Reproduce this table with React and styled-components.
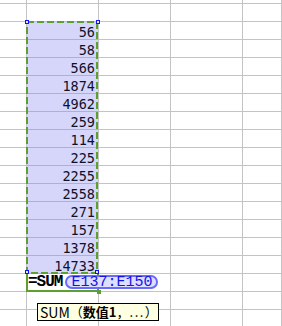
import React from "react";
import styled, { createGlobalStyle } from "styled-components";

const GlobalStyle = createGlobalStyle`
  html, body {
    margin: 0;
    padding: 0;
    background: #fff;
    overflow: hidden;
  }
`;

const GRID = "#c4c4c4";
const GREEN = "#5ca032";
const PICK = "#d6d6fb";

const Sheet = styled.div`
  position: relative;
  width: 282px;
  height: 326px;
  overflow: hidden;
  background: #fff;
`;

const Grid = styled.div`
  display: grid;
  grid-template-columns: 27px 72px 72px 72px 1fr;
  grid-template-rows: 4px repeat(18, 18px);
`;

const Cell = styled.div`
  box-sizing: border-box;
  border-right: 1px solid ${GRID};
  border-bottom: 1px solid ${(p) => (p.$picked ? "#aeaedc" : GRID)};
  background: ${(p) => (p.$picked ? PICK : "#fff")};
  display: flex;
  justify-content: flex-end;
  align-items: flex-end;
  padding: 0 3px 1px 0;
  font-family: "DejaVu Sans Mono", monospace;
  font-size: 13.5px;
  line-height: 12px;
  color: #10102a;
`;

/* the cell being edited: green frame, text runs past its right edge */
const EditCell = styled.div`
  position: relative;
  z-index: 2;
  box-sizing: border-box;
  margin-left: -1px;
  border: 2px solid ${GREEN};
  border-top: none;
  background: #fff;
  display: flex;
  align-items: center;
  white-space: nowrap;

  &::after {
    content: "";
    position: absolute;
    right: -4px;
    bottom: -4px;
    width: 4px;
    height: 4px;
    background: ${GREEN};
  }
`;

const Marquee = styled.svg`
  position: absolute;
  left: 24px;
  top: 19px;
  overflow: visible;
  z-index: 1;
`;

const Func = styled.span`
  font-family: "Liberation Mono", monospace;
  font-weight: bold;
  font-size: 16px;
  letter-spacing: -1px;
  color: #000;
  line-height: 14px;
`;

const RangeRef = styled.span`
  margin-left: 3px;
  height: 14px;
  box-sizing: border-box;
  padding: 0 4px;
  border: 2px solid #6a6aff;
  border-radius: 8px;
  background: #dedeff;
  color: #1414e6;
  font-family: "Liberation Mono", monospace;
  font-size: 15px;
  line-height: 11px;
  display: flex;
  align-items: center;
`;

const Tip = styled.div`
  position: absolute;
  left: 37px;
  top: 303px;
  z-index: 3;
  width: 122px;
  height: 18px;
  box-sizing: border-box;
  border: 1px solid #000;
  background: #ffffe1;
  display: flex;
  align-items: center;
  padding-left: 2px;
  font-family: "Noto Sans CJK SC", sans-serif;
  font-size: 13px;
  line-height: 16px;
  color: #000;
  white-space: nowrap;
`;

const TipName = styled.span`
  font-size: 14px;
`;

const TipArg = styled.b`
  font-weight: bold;
`;

const Dots = styled.span`
  letter-spacing: 1.5px;
`;

const values = [56, 58, 566, 1874, 4962, 259, 114, 225, 2255, 2558, 271, 157, 1378, 14733];
const EDIT_ROW = 2 + values.length;

export default function App() {
  const rows = [];
  for (let r = 0; r < 19; r++) {
    for (let c = 0; c < 5; c++) {
      const idx = r - 2;
      const picked = c === 1 && idx >= 0 && idx < values.length;
      if (c === 1 && r === EDIT_ROW) {
        rows.push(
          <EditCell key={r + "-" + c}>
            <Func>=SUM</Func>
            <RangeRef>E137:E150</RangeRef>
          </EditCell>
        );
        continue;
      }
      rows.push(
        <Cell key={r + "-" + c} $picked={picked}>
          {picked ? values[idx] : null}
        </Cell>
      );
    }
  }

  return (
    <>
      <GlobalStyle />
      <Sheet>
        <Grid>{rows}</Grid>
        <Marquee width="78" height="259">
          <rect
            x="3"
            y="3"
            width="70"
            height="251"
            fill="none"
            stroke={GREEN}
            strokeWidth="2"
            strokeDasharray="7 3"
          />
          {[
            [1, 1],
            [72, 1],
            [1, 251],
            [71, 251],
          ].map(([x, y]) => (
            <rect
              key={x + "," + y}
              x={x + 0.5}
              y={y + 0.5}
              width="3"
              height="3"
              fill="#e8e8ff"
              stroke="#1010ff"
              strokeWidth="1"
            />
          ))}
        </Marquee>
        <Tip>
          <TipName>SUM</TipName>（<TipArg>数值1</TipArg>，<Dots>...</Dots>）
        </Tip>
      </Sheet>
    </>
  );
}
